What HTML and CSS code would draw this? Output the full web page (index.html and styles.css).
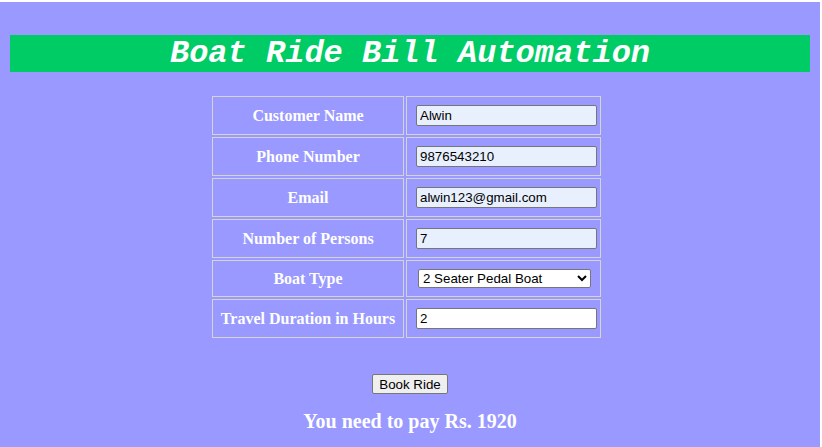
FILE: index.html
```html
<!DOCTYPE html>
<html>
<head>
<meta charset="utf-8">
<title>Boat Ride Bill Automation</title>
<link rel="stylesheet" href="styles.css">
</head>
<body>
<h1 class="title">Boat Ride Bill Automation</h1>
<div class="form-wrap">
  <table class="form-table">
    <tr>
      <td class="label">Customer Name</td>
      <td class="field"><input class="text-in filled" type="text" value="Alwin"></td>
    </tr>
    <tr>
      <td class="label">Phone Number</td>
      <td class="field"><input class="text-in filled" type="text" value="9876543210"></td>
    </tr>
    <tr>
      <td class="label">Email</td>
      <td class="field"><input class="text-in filled" type="text" value="alwin123@gmail.com"></td>
    </tr>
    <tr>
      <td class="label">Number of Persons</td>
      <td class="field"><input class="text-in filled" type="text" value="7"></td>
    </tr>
    <tr>
      <td class="label">Boat Type</td>
      <td class="field"><select class="sel"><option>2 Seater Pedal Boat</option><option>4 Seater Pedal Boat</option></select></td>
    </tr>
    <tr>
      <td class="label">Travel Duration in Hours</td>
      <td class="field"><input class="text-in" type="text" value="2"></td>
    </tr>
  </table>
</div>
<div class="actions"><button class="book-btn" type="button">Book Ride</button></div>
<p class="result">You need to pay Rs. 1920</p>
</body>
</html>
```
FILE: styles.css
```css
html {
  background: #ffffff;
  height: 100%;
}
body {
  margin: 2px 2px 0 0;
  padding: 33px 10px 0 10px;
  background: #9999ff;
  min-height: calc(100vh - 2px);
  box-sizing: border-box;
  font-family: "Liberation Serif", "Times New Roman", serif;
}
.title {
  margin: 0;
  height: 37px;
  line-height: 37px;
  background: #00cc66;
  color: #ffffff;
  text-align: center;
  font-family: "Liberation Mono", "Courier New", monospace;
  font-style: italic;
  font-weight: bold;
  font-size: 32px;
}
.form-wrap {
  margin-top: 22px;
  padding-right: 7px;
}
.form-table {
  margin: 0 auto;
  border-collapse: separate;
  border-spacing: 2px;
}
.form-table td {
  border: 1px solid #d4d4d4;
  vertical-align: middle;
}
.form-table td.label {
  width: 190px;
  padding: 8px 0;
  white-space: nowrap;
  text-align: center;
  color: #ffffff;
  font-weight: bold;
  font-size: 16px;
}
.form-table td.field {
  width: 181px;
  padding: 8px 3px 8px 9px;
}
.text-in {
  display: block;
  box-sizing: border-box;
  width: 181px;
  height: 21px;
  margin: 0;
  padding: 1px 3px;
  border: 1px solid #767676;
  border-radius: 2px;
  background: #ffffff;
  font-family: "Liberation Sans", Arial, sans-serif;
  font-size: 13.333px;
  color: #000000;
}
.text-in.filled {
  background: #e8f0fe;
}
.sel {
  display: block;
  box-sizing: border-box;
  width: 173px;
  height: 19px;
  margin: 0 0 0 2px;
  font-family: "Liberation Sans", Arial, sans-serif;
  font-size: 13.333px;
  color: #000000;
  background: #ffffff;
  border: 1px solid #767676;
  border-radius: 2px;
}
.actions {
  margin-top: 34px;
  text-align: center;
}
.book-btn {
  font-family: "Liberation Sans", Arial, sans-serif;
  font-size: 13.333px;
  height: 20px;
  padding: 1px 6px;
  border: 1px solid #767676;
  border-radius: 2px;
  background: #efefef;
  color: #000000;
}
.result {
  margin: 16px 0 0 0;
  text-align: center;
  color: #ffffff;
  font-weight: bold;
  font-size: 20px;
}
```
